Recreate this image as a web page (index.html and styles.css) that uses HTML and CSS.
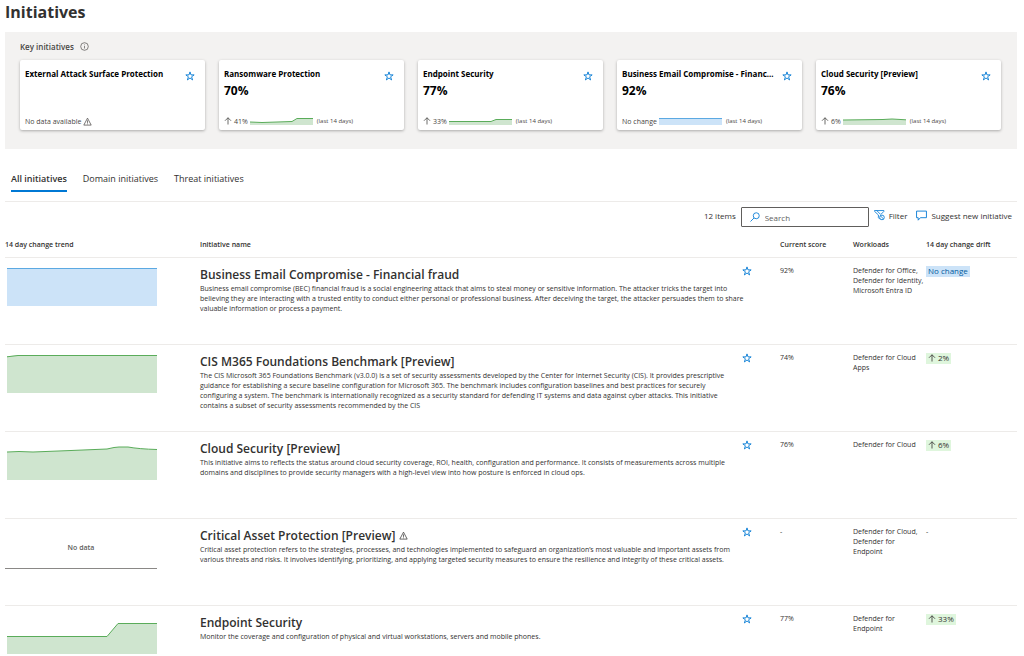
FILE: index.html
```html
<!DOCTYPE html>
<html lang="en">
<head>
<meta charset="utf-8">
<title>Initiatives</title>
<link rel="stylesheet" href="styles.css">
</head>
<body>
<svg class="symbols" aria-hidden="true">
  <symbol id="star" viewBox="0 0 20 20"><path d="M10 1.8l2 6h6.3l-5.1 3.8 2 6.2-5.2-3.8-5.2 3.8 2-6.2-5.1-3.8H8z" fill="none" stroke="currentColor" stroke-width="1.8"/></symbol>
  <symbol id="warn" viewBox="0 0 20 20"><path d="M10 2.5L18.2 18H1.8zM10 7.5v5.6M10 14.4v1.8" fill="none" stroke="currentColor" stroke-width="1.6"/></symbol>
  <symbol id="up" viewBox="0 0 16 16"><path d="M8 15V1.5M2 7.5l6-6 6 6" fill="none" stroke="currentColor" stroke-width="1.6"/></symbol>
</svg>
<main class="page">
  <h1 class="title">Initiatives</h1>

  <section class="key">
    <h2 class="key-title">Key initiatives
      <svg class="icon-info" viewBox="0 0 18 18"><circle cx="9" cy="9" r="7.6" fill="none" stroke="currentColor" stroke-width="1.3"/><path d="M9 8v5M9 5v1.5" stroke="currentColor" stroke-width="1.3"/></svg>
    </h2>
    <div class="cards">
      <article class="card">
        <div class="card-head"><h3 class="card-name">External Attack Surface Protection</h3><button class="star" aria-label="Favorite"><svg><use href="#star"/></svg></button></div>
        <p class="card-foot">No data available <svg class="icon-warn"><use href="#warn"/></svg></p>
      </article>
      <article class="card">
        <div class="card-head"><h3 class="card-name">Ransomware Protection</h3><button class="star" aria-label="Favorite"><svg><use href="#star"/></svg></button></div>
        <p class="card-score">70%</p>
        <p class="card-foot"><svg class="icon-up"><use href="#up"/></svg> 41% <svg class="spark green" viewBox="0 0 63 8"><path class="area" d="M0 5L12 5.5 42 4.500 47 2H63V8H0z"/><path class="line" d="M0 5L12 5.500 42 4.500 47 1.500H63"/></svg><small class="days">(last 14 days)</small></p>
      </article>
      <article class="card">
        <div class="card-head"><h3 class="card-name">Endpoint Security</h3><button class="star" aria-label="Favorite"><svg><use href="#star"/></svg></button></div>
        <p class="card-score">77%</p>
        <p class="card-foot"><svg class="icon-up"><use href="#up"/></svg> 33% <svg class="spark green" viewBox="0 0 63 8"><path class="area" d="M0 5H42L47 2.500H63V8H0z"/><path class="line" d="M0 4.500H42L47 2.500H63"/></svg><small class="days">(last 14 days)</small></p>
      </article>
      <article class="card">
        <div class="card-head"><h3 class="card-name">Business Email Compromise - Financ...</h3><button class="star" aria-label="Favorite"><svg><use href="#star"/></svg></button></div>
        <p class="card-score">92%</p>
        <p class="card-foot">No change <svg class="spark blue" viewBox="0 0 63 8"><path class="area" d="M0 1H63V8H0z"/><path class="line" d="M0 1.500H63"/></svg><small class="days">(last 14 days)</small></p>
      </article>
      <article class="card">
        <div class="card-head"><h3 class="card-name">Cloud Security [Preview]</h3><button class="star" aria-label="Favorite"><svg><use href="#star"/></svg></button></div>
        <p class="card-score">76%</p>
        <p class="card-foot"><svg class="icon-up"><use href="#up"/></svg> 6% <svg class="spark green" viewBox="0 0 63 8"><path class="area" d="M0 3L40 2.500 49 2 63 3V8H0z"/><path class="line" d="M0 3L40 2.500 49 2 63 2.800"/></svg><small class="days">(last 14 days)</small></p>
      </article>
    </div>
  </section>

  <nav class="tabs">
    <button class="tab active">All initiatives</button>
    <button class="tab">Domain initiatives</button>
    <button class="tab">Threat initiatives</button>
  </nav>

  <div class="toolbar">
    <span class="count">12 items</span>
    <label class="search"><svg class="icon-search" viewBox="0 0 20 20"><circle cx="12.500" cy="7.500" r="6" fill="none" stroke="currentColor" stroke-width="1.700"/><path d="M8 12L1 19" stroke="currentColor" stroke-width="1.700"/></svg><input type="text" placeholder="Search" aria-label="Search"></label>
    <button class="tool"><svg viewBox="0 0 20 20"><path d="M11 17l-3-3V9L1 2.500V1h17v1.500L12.500 8M5 1l7 7" fill="none" stroke="currentColor" stroke-width="1.500"/><circle cx="14.500" cy="13.500" r="4.200" fill="none" stroke="currentColor" stroke-width="1.500"/><path d="M11.500 10.500l6 6" stroke="currentColor" stroke-width="1.500"/></svg>Filter</button>
    <button class="tool"><svg viewBox="0 0 20 20"><path d="M1 2h18v12H8l-4 4.500V14H1z" fill="none" stroke="currentColor" stroke-width="1.600"/></svg>Suggest new initiative</button>
  </div>

  <table class="grid">
    <colgroup><col class="c-trend"><col><col class="c-star"><col class="c-num"><col class="c-num"><col class="c-drift"></colgroup>
    <thead><tr><th>14 day change trend</th><th>Initiative name</th><th></th><th>Current score</th><th>Workloads</th><th>14 day change drift</th></tr></thead>
    <tbody>
      <tr>
        <td><svg class="chart blue" viewBox="0 0 150 40"><path class="area" d="M0 2H150V40H0z"/><path class="line" d="M0 2.500H150"/></svg></td>
        <td><h3 class="name">Business Email Compromise - Financial fraud</h3><p class="desc wide">Business email compromise (BEC) financial fraud is a social engineering attack that aims to steal money or sensitive information. The attacker tricks the target into believing they are interacting with a trusted entity to conduct either personal or professional business. After deceiving the target, the attacker persuades them to share valuable information or process a payment.</p></td>
        <td><button class="star" aria-label="Favorite"><svg><use href="#star"/></svg></button></td>
        <td>92%</td><td>Defender for Office, Defender for Identity, Microsoft Entra ID</td>
        <td><span class="badge info">No change</span></td>
      </tr>
      <tr>
        <td><svg class="chart green" viewBox="0 0 150 40"><path class="area" d="M0 3.500L11 2H150V40H0z"/><path class="line" d="M0 3.800L11 2.500H150"/></svg></td>
        <td><h3 class="name">CIS M365 Foundations Benchmark [Preview]</h3><p class="desc">The CIS Microsoft 365 Foundations Benchmark (v3.0.0) is a set of security assessments developed by the Center for Internet Security (CIS). It provides prescriptive guidance for establishing a secure baseline configuration for Microsoft 365. The benchmark includes configuration baselines and best practices for securely configuring a system. The benchmark is internationally recognized as a security standard for defending IT systems and data against cyber attacks. This initiative contains a subset of security assessments recommended by the CIS</p></td>
        <td><button class="star" aria-label="Favorite"><svg><use href="#star"/></svg></button></td>
        <td>74%</td><td>Defender for Cloud Apps</td>
        <td><span class="badge good"><svg class="icon-up"><use href="#up"/></svg>2%</span></td>
      </tr>
      <tr>
        <td><svg class="chart green" viewBox="0 0 150 40"><path class="area" d="M0 12L26 12 64 10.500 100 9Q108 7 112 7H121Q132 9 150 9.500V40H0z"/><path class="line" d="M0 12L12 11.500 26 12 64 10.500 100 9Q108 7 112 7H121Q132 9 150 9.500"/></svg></td>
        <td><h3 class="name">Cloud Security [Preview]</h3><p class="desc">This initiative aims to reflects the status around cloud security coverage, ROI, health, configuration and performance. It consists of measurements across multiple domains and disciplines to provide security managers with a high-level view into how posture is enforced in cloud ops.</p></td>
        <td><button class="star" aria-label="Favorite"><svg><use href="#star"/></svg></button></td>
        <td>76%</td><td>Defender for Cloud</td>
        <td><span class="badge good"><svg class="icon-up"><use href="#up"/></svg>6%</span></td>
      </tr>
      <tr>
        <td><div class="no-data">No data</div></td>
        <td><h3 class="name">Critical Asset Protection [Preview] <svg class="icon-warn"><use href="#warn"/></svg></h3><p class="desc">Critical asset protection refers to the strategies, processes, and technologies implemented to safeguard an organization’s most valuable and important assets from various threats and risks. It involves identifying, prioritizing, and applying targeted security measures to ensure the resilience and integrity of these critical assets.</p></td>
        <td><button class="star" aria-label="Favorite"><svg><use href="#star"/></svg></button></td>
        <td>-</td><td>Defender for Cloud, Defender for Endpoint</td><td>-</td>
      </tr>
      <tr>
        <td><svg class="chart green" viewBox="0 0 150 40"><path class="area" d="M0 22.500H100L111 9.500H150V40H0z"/><path class="line" d="M0 22.500H100L111 9.500H150"/></svg></td>
        <td><h3 class="name">Endpoint Security</h3><p class="desc">Monitor the coverage and configuration of physical and virtual workstations, servers and mobile phones.</p></td>
        <td><button class="star" aria-label="Favorite"><svg><use href="#star"/></svg></button></td>
        <td>77%</td><td>Defender for Endpoint</td>
        <td><span class="badge good"><svg class="icon-up"><use href="#up"/></svg>33%</span></td>
      </tr>
    </tbody>
  </table>
</main>
</body>
</html>
```
FILE: styles.css
```css
* { box-sizing: border-box; }
body { margin: 0; background: #fff; color: #323130; font-family: "Open Sans", "Noto Sans", sans-serif; font-size: 8px; }
h1, h2, h3, p { margin: 0; }
button { border: 0; padding: 0; background: none; font: inherit; color: inherit; }
.symbols { display: none; }
.page { padding: 0 7px 0 5px; }
.title { font-size: 16px; line-height: 24px; font-weight: 700; }

.key { margin-top: 8px; padding: 6px 16px 19px 15px; background: #f3f2f1; }
.key-title { display: flex; align-items: center; gap: 6px; height: 16px; margin-bottom: 6px; font-size: 8px; font-weight: 600; color: #484644; }
.icon-info { width: 9px; height: 9px; }
.cards { display: grid; grid-template-columns: repeat(5, 1fr); gap: 14px; }
.card { display: flex; flex-direction: column; min-width: 0; height: 70px; padding: 8px 10px 3px 5px; background: #fff; border-radius: 2px; box-shadow: 0 1px 3px rgba(0, 0, 0, .3); color: #000; }
.card-head { display: flex; justify-content: space-between; gap: 5px; }
.card-name { white-space: nowrap; font-size: 8px; line-height: 12px; font-weight: 700; }
.card-head .star { margin-top: 3px; }
.card-score { font-size: 12px; line-height: 20px; font-weight: 700; }
.card-foot { display: flex; align-items: center; gap: 2px; height: 12px; margin-top: auto; font-size: 7px; color: #484644; white-space: nowrap; }
.days { margin-left: 2px; font-size: 6px; }
.icon-up { width: 8px; height: 8px; flex: none; }
.icon-warn { width: 9px; height: 9px; }
.star { display: block; flex: none; width: 10px; height: 10px; color: #0078d4; }
.star svg { display: block; width: 10px; height: 10px; }
.spark { width: 63px; height: 8px; flex: none; }
.green { --area: #cfe5cf; --line: #5aac5a; }
.blue { --area: #cce3f8; --line: #5ca9e2; }
.area { fill: var(--area); }
.line { fill: none; stroke: var(--line); stroke-width: 1; }

.tabs { display: flex; gap: 16px; margin-top: 18px; padding: 0 6px 9px; border-bottom: 1px solid #edebe9; }
.tab { height: 25px; border-bottom: 2px solid transparent; font-size: 9px; }
.tab.active { border-color: #0078d4; font-weight: 600; }

.toolbar { display: flex; align-items: center; justify-content: flex-end; gap: 5px; height: 30px; padding-right: 5px; font-size: 8px; }
.count, .tool { padding-bottom: 3px; }
.search { display: flex; align-items: center; gap: 5px; width: 128px; height: 20px; padding: 0 8px; border: 1px solid #605e5c; border-radius: 1px; }
.search input { flex: 1; min-width: 0; border: 0; padding: 0; outline: 0; font: inherit; }
.search input::placeholder { color: #605e5c; opacity: 1; }
.icon-search { width: 10px; height: 10px; color: #0078d4; }
.tool { display: flex; align-items: center; gap: 4px; margin-right: 4px; }
.tool svg { width: 11px; height: 11px; color: #0078d4; }
.tool:last-child { margin-right: 0; }

.grid { width: 100%; table-layout: fixed; border-collapse: collapse; }
.c-trend { width: 195px; }
.c-star { width: 38px; }
.c-num { width: 73px; }
.c-drift { width: 91px; }
th { height: 25px; padding: 0; text-align: left; font-size: 7px; font-weight: 600; }
tr { border-bottom: 1px solid #edebe9; }
td { height: 87px; padding: 8px 0 0; vertical-align: top; font-size: 7px; line-height: 10px; }
.chart { display: block; width: 150px; height: 40px; margin-left: 2px; }
.no-data { width: 152px; height: 42px; border-bottom: 1px solid #8a8886; text-align: center; line-height: 42px; font-weight: 600; color: #605e5c; }
.name { font-size: 12px; line-height: 18px; font-weight: 600; }
.desc { padding-right: 4px; line-height: 10px; }
.desc.wide { padding-right: 0; margin-right: -8px; }
.badge { display: inline-flex; align-items: center; gap: 2px; height: 11px; padding: 0 2px; font-size: 8px; }
.info { background: #cce3f8; color: #005a9e; }
.good { background: #dff6dd; }
```
